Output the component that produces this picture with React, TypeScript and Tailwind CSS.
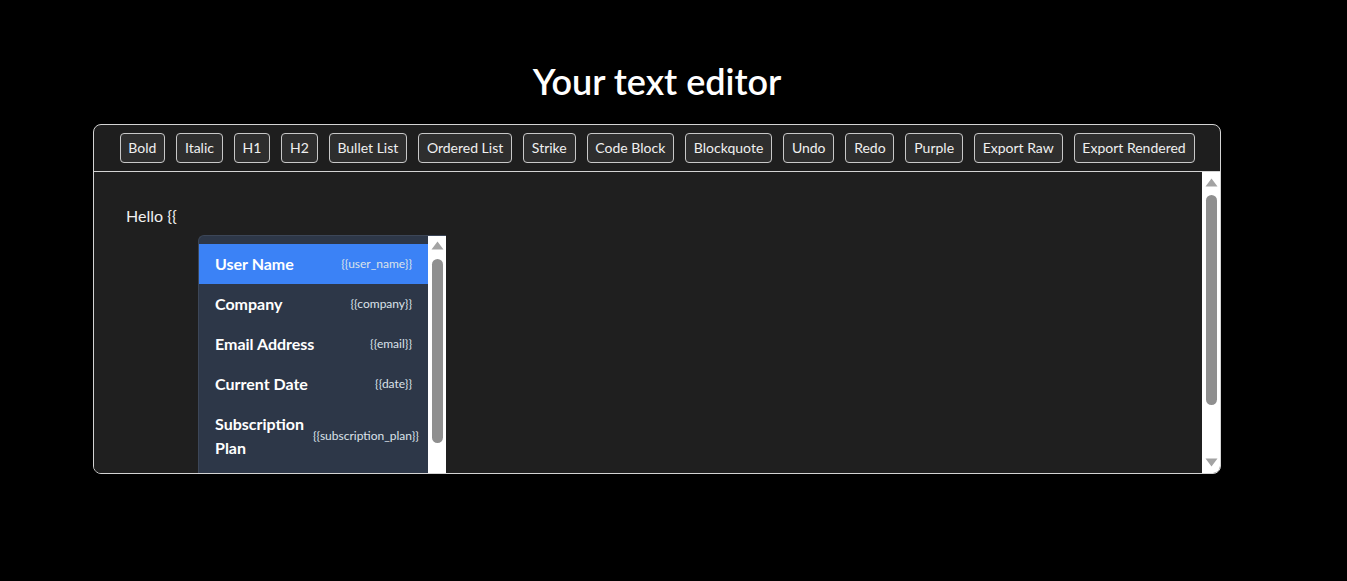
import React from "react";

const buttons = [
  "Bold",
  "Italic",
  "H1",
  "H2",
  "Bullet List",
  "Ordered List",
  "Strike",
  "Code Block",
  "Blockquote",
  "Undo",
  "Redo",
  "Purple",
  "Export Raw",
  "Export Rendered",
];

const items = [
  { label: "User Name", ph: "{{user_name}}", active: true },
  { label: "Company", ph: "{{company}}" },
  { label: "Email Address", ph: "{{email}}" },
  { label: "Current Date", ph: "{{date}}" },
  { label: "Subscription Plan", ph: "{{subscription_plan}}" },
];

function Up() {
  return (
    <svg width="13" height="9" viewBox="0 0 13 9" className="block shrink-0">
      <path d="M6.5 0.5 L12.5 8.5 L0.5 8.5 Z" fill="#a3a3a3" />
    </svg>
  );
}

function Down() {
  return (
    <svg width="13" height="9" viewBox="0 0 13 9" className="block shrink-0">
      <path d="M0.5 0.5 L12.5 0.5 L6.5 8.5 Z" fill="#a3a3a3" />
    </svg>
  );
}

export default function App() {
  return (
    <div
      className="min-h-[581px] w-full bg-black text-white"
      style={{ fontFamily: "Lato, 'Noto Sans', sans-serif" }}
    >
      <div className="w-[1314px] flex flex-col items-center pt-[57px]">
        <h1 className="text-[36px] leading-[48px] font-semibold text-white">
          Your text editor
        </h1>
        <div className="mt-[19px] w-[1128px] h-[350px] rounded-[8px] border border-[#d4d4d4] bg-[#1e1e1e] overflow-hidden flex flex-col">
          <div className="flex justify-center gap-[11px] py-2 border-b border-[#d4d4d4]">
            {buttons.map((b) => (
              <button
                key={b}
                className="h-[30px] px-[7.8px] rounded-[4px] border border-[#c8c8c8] bg-[#2e2e2e] text-[14px] text-[#f0f0f0] leading-none"
              >
                {b}
              </button>
            ))}
          </div>
          <div className="flex-1 flex min-h-0">
            <div className="relative flex-1 p-8 bg-[#1f1f1f]">
              <p className="text-[16px] leading-6 text-[#f0f0f0]">Hello {"{{"}</p>
              <div className="absolute left-[104px] top-[63px] w-[248px] h-[300px] flex rounded-tl-[6px] bg-[#2d3748] border-l border-t border-[#3c4657]">
                <div className="flex-1 pt-2 min-w-0">
                  {items.map((it) => (
                    <div
                      key={it.label}
                      className={
                        "flex items-center justify-between px-4 py-2 " +
                        (it.active ? "bg-[#3b82f6]" : "")
                      }
                    >
                      <span className="text-[16px] leading-6 font-bold text-white">
                        {it.label}
                      </span>
                      <span className="ml-[9px] shrink-0 whitespace-nowrap text-[12px] text-[#dbe2ea]">
                        {it.ph}
                      </span>
                    </div>
                  ))}
                </div>
                <div className="w-[18px] bg-white flex flex-col items-center pt-[5px]">
                  <Up />
                  <div className="mt-[9px] w-[11px] h-[184px] rounded-full bg-[#8f8f8f]" />
                </div>
              </div>
            </div>
            <div className="w-[18px] bg-white flex flex-col items-center pt-[6px] pb-[6px]">
              <Up />
              <div className="mt-[8px] w-[11px] h-[210px] rounded-full bg-[#8f8f8f]" />
              <div className="flex-1" />
              <Down />
            </div>
          </div>
        </div>
      </div>
    </div>
  );
}
